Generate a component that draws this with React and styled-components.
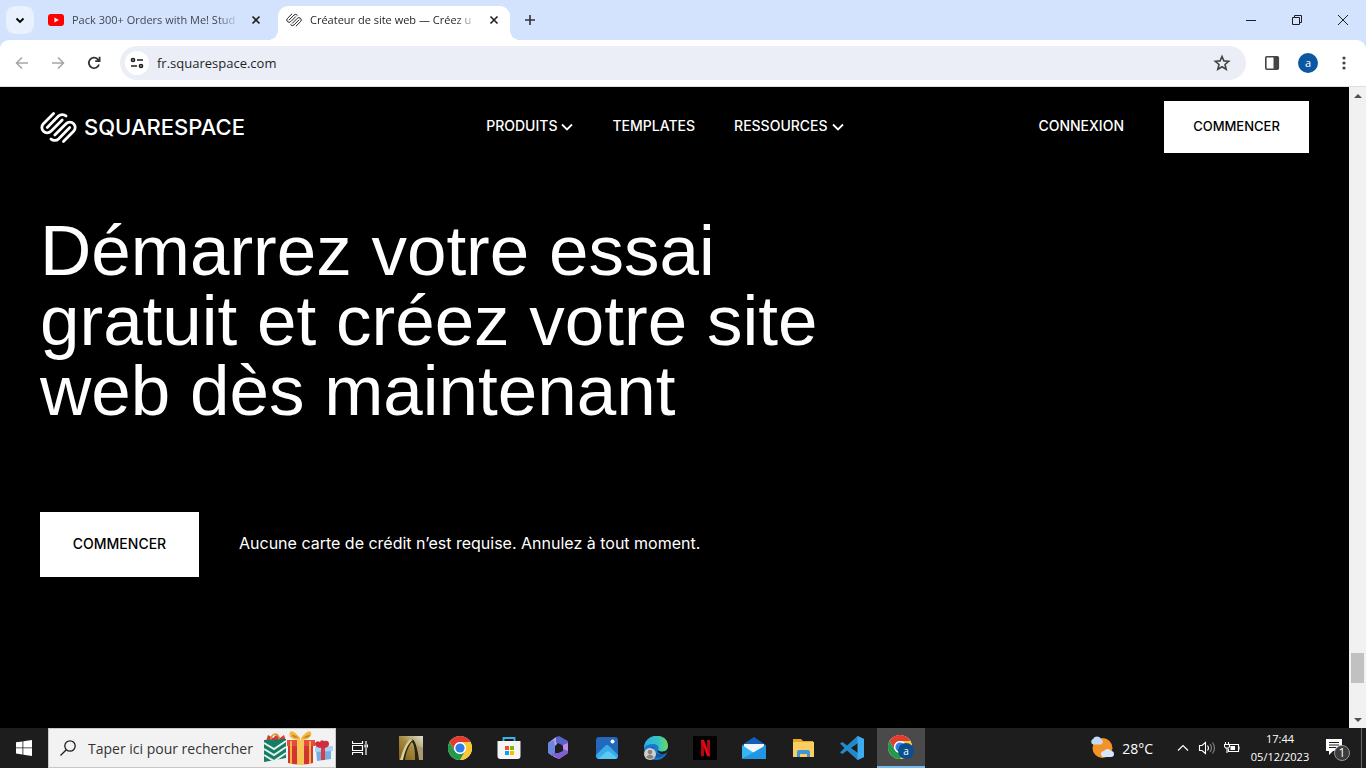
import React from "react";
import styled, { createGlobalStyle, css } from "styled-components";

const system = `"Open Sans", "Noto Sans", sans-serif`;
const brand = `Inter, "Liberation Sans", sans-serif`;

const GlobalStyle = createGlobalStyle`
  *, *::before, *::after { box-sizing: border-box; }
  body { margin: 0; background: #000; font-family: ${system}; }
  button, input { font: inherit; color: inherit; }
  button { border: 0; padding: 0; background: none; }
  a { color: inherit; text-decoration: none; }
  h1, p { margin: 0; }
  svg { display: block; flex: none; }
`;

const Window = styled.div`
  min-height: 100vh;
  display: flex;
  flex-direction: column;
`;

/* Browser chrome */
const TabStrip = styled.div`
  height: 40px;
  display: flex;
  background: #d3e3fd;
`;
const TabSearch = styled.button`
  width: 28px;
  height: 28px;
  margin: 6px;
  border-radius: 9px;
  background: #e9f1fe;
  display: grid;
  place-items: center;
`;
const Tabs = styled.div`
  display: flex;
  gap: 6px;
  padding-top: 6px;
`;
const activeTab = css`
  background: #fff;
  border-radius: 10px 10px 0 0;
  &::before, &::after {
    content: "";
    position: absolute;
    bottom: 0;
    width: 10px;
    height: 10px;
  }
  &::before { left: -10px; background: radial-gradient(circle at 0 0, transparent 10px, #fff 10px); }
  &::after { right: -10px; background: radial-gradient(circle at 100% 0, transparent 10px, #fff 10px); }
`;
const Tab = styled.div`
  position: relative;
  width: 232px;
  height: 34px;
  padding: 0 10px 6px 8px;
  display: flex;
  align-items: center;
  color: ${(p) => (p.$active ? "#1f1f1f" : "#41464f")};
  ${(p) => p.$active && activeTab}
`;
const TabTitle = styled.span`
  flex: 1;
  margin: 0 10px 0 8px;
  overflow: hidden;
  white-space: nowrap;
  font-size: 11px;
  line-height: 18px;
  mask-image: linear-gradient(90deg, #000 86%, transparent);
`;
const IconButton = styled.button`
  width: ${(p) => p.$w || 36}px;
  height: ${(p) => p.$h || 36}px;
  display: grid;
  place-items: center;
  color: ${(p) => p.$color || "#1f1f1f"};
`;
const WindowControls = styled.div`
  margin-left: auto;
  display: flex;
`;
const ToolbarBack = styled.div`
  background: #d3e3fd;
`;
const Toolbar = styled.div`
  height: 47px;
  padding: 0 4px;
  display: flex;
  align-items: center;
  background: #fff;
  border-bottom: 1px solid #dcdfe3;
  border-radius: 9px 9px 0 0;
`;
const Omnibox = styled.label`
  flex: 1;
  height: 34px;
  margin: 0 8px;
  padding: 0 6px 0 5px;
  display: flex;
  align-items: center;
  gap: 8px;
  border-radius: 17px;
  background: #ebeef7;
`;
const SiteInfo = styled.span`
  width: 24px;
  height: 24px;
  border-radius: 50%;
  background: #fff;
  display: grid;
  place-items: center;
`;
const Address = styled.input`
  flex: 1;
  min-width: 0;
  border: 0;
  padding: 0;
  outline: 0;
  background: none;
  font-size: 13px;
  color: #1f1f1f;
`;
const Avatar = styled.span`
  width: 20px;
  height: 20px;
  border-radius: 50%;
  background: #0b57a0;
  color: #fff;
  font-size: 11px;
  line-height: 19px;
  text-align: center;
`;

/* Page */
const Viewport = styled.div`
  flex: 1;
  display: flex;
`;
const Page = styled.div`
  flex: 1;
  padding: 14px 40px 40px;
  background: #000;
  color: #fff;
  font-family: ${brand};
`;
const Header = styled.header`
  display: grid;
  grid-template-columns: 446fr 552fr auto;
  align-items: center;
`;
const Logo = styled.a`
  display: flex;
  align-items: center;
  gap: 7px;
  font-size: 22px;
  line-height: 24px;
  font-weight: 500;
`;
const Nav = styled.nav`
  display: flex;
  gap: 39px;
`;
const NavLink = styled.a`
  display: flex;
  align-items: center;
  gap: 4px;
  padding-bottom: 2px;
  font-size: 14px;
  line-height: 20px;
  font-weight: 500;
`;
const NavButton = styled(NavLink).attrs({ as: "button", type: "button" })``;
const Account = styled.div`
  display: flex;
  align-items: center;
  gap: 40px;
`;
const Cta = styled.a`
  display: grid;
  place-items: center;
  width: ${(p) => (p.$large ? 159 : 145)}px;
  height: ${(p) => (p.$large ? 65 : 52)}px;
  padding-bottom: 2px;
  background: #fff;
  color: #000;
  font-size: ${(p) => (p.$large ? 14 : 13)}px;
  font-weight: 500;
`;
const Headline = styled.h1`
  max-width: 800px;
  margin: 63px 0 86px;
  font-family: "Liberation Sans", Arial, sans-serif;
  font-size: 71px;
  line-height: 70px;
  font-weight: 400;
`;
const Offer = styled.div`
  display: flex;
  align-items: center;
  gap: 40px;
`;
const OfferNote = styled.p`
  padding-bottom: 4px;
  font-size: 16px;
  line-height: 24px;
`;
const Scrollbar = styled.div`
  width: 17px;
  display: flex;
  flex-direction: column;
  align-items: center;
  background: #f1f1f1;
`;
const Space = styled.div`
  flex: ${(p) => p.$grow};
`;
const Thumb = styled.div`
  width: 13px;
  height: 30px;
  background: #c1c1c1;
`;

/* Taskbar */
const Taskbar = styled.footer`
  height: 40px;
  display: flex;
  background: #1d1d1d;
  color: #fff;
`;
const TaskButton = styled.button`
  width: 48px;
  height: 40px;
  display: grid;
  place-items: center;
  background: ${(p) => (p.$active ? "#4a4a4a" : "none")};
  border-bottom: ${(p) => (p.$active ? "2px solid #76b9ed" : "0")};
`;
const Search = styled.label`
  width: 288px;
  display: flex;
  align-items: center;
  padding: 0 2px 0 11px;
  background: #f2f2f2;
  border: 1px solid #c8c8c8;
  color: #1f1f1f;
`;
const SearchInput = styled.input`
  flex: 1;
  min-width: 0;
  margin: 0 6px 0 12px;
  border: 0;
  padding: 0;
  outline: 0;
  background: none;
  font-size: 14px;
  &::placeholder { color: #333; opacity: 1; }
`;
const Apps = styled.div`
  display: flex;
  gap: 1px;
  margin-left: 3px;
`;
const Tray = styled.div`
  margin-left: auto;
  display: flex;
  align-items: center;
`;
const Weather = styled.button`
  display: flex;
  align-items: center;
  gap: 8px;
  margin-right: 18px;
  font-size: 14px;
`;
const Clock = styled.time`
  width: 70px;
  text-align: center;
  font-size: 11px;
  line-height: 18px;
`;
const ShowDesktop = styled.button`
  width: 5px;
  height: 40px;
  border-left: 1px solid #6a6a6a;
`;

const Stroke = ({ size = 16, w = 1.5, d }) => (
  <svg width={size} height={size} viewBox={`0 0 ${size} ${size}`} fill="none" stroke="currentColor" strokeWidth={w}>
    <path d={d} />
  </svg>
);
const CloseIcon = () => <Stroke size={12} w={1.6} d="M2.500 2.500l7 7M9.500 2.500l-7 7" />;
const NavChevron = () => <Stroke size={12} w={1.8} d="M1 4.500l5 5 5-5" />;

const SquarespaceMark = ({ size, w }) => (
  <svg width={size} height={size} viewBox="0 0 24 24" fill="none" stroke="currentColor" strokeWidth={w} strokeLinecap="round">
    <path d="M9.600 16.900L16.900 9.550A3.460 3.460 0 0 1 21.800 14.450L15.200 21.050" />
    <path d="M7.100 19.400A3.460 3.460 0 0 0 12 19.400L19.300 12" />
    <path d="M14.400 7.100L7.100 14.450A3.460 3.460 0 0 1 2.200 9.550L8.800 2.950" />
    <path d="M16.900 4.600A3.460 3.460 0 0 0 12 4.600L4.700 12" />
  </svg>
);
const YouTube = () => (
  <svg width="16" height="16" viewBox="0 0 16 16">
    <rect y="2" width="16" height="12" rx="3" fill="#f00" />
    <path d="M6.400 5.400v5.200l4.400-2.600z" fill="#fff" />
  </svg>
);
const Chrome = ({ badge }) => (
  <svg width={badge ? 26 : 24} height="24" viewBox={badge ? "0 0 26 24" : "0 0 24 24"}>
    <circle cx="12" cy="12" r="12" fill="#fff" />
    <path d="M1.600 6A12 12 0 0 1 22.400 6H12a6 6 0 0 0-5.200 9z" fill="#e33b2e" />
    <path d="M22.400 6A12 12 0 0 1 12 24l5.200-9A6 6 0 0 0 12 6z" fill="#fcc934" />
    <path d="M12 24A12 12 0 0 1 1.600 6l5.200 9a6 6 0 0 0 10.400 0z" fill="#229a4a" />
    <circle cx="12" cy="12" r="5.800" fill="#fff" />
    <circle cx="12" cy="12" r="4.600" fill="#2f7de9" />
    {badge && (
      <>
        <circle cx="18" cy="16" r="8" fill="#0b4f8f" />
        <text x="18" y="20" textAnchor="middle" fontSize="10" fill="#fff">a</text>
      </>
    )}
  </svg>
);
const Arch = () => (
  <svg width="24" height="24" viewBox="0 0 24 24">
    <defs>
      <linearGradient id="arch" x1="0" y1="1" x2="1" y2="0">
        <stop offset="0" stopColor="#7b5c14" /><stop offset=".5" stopColor="#a58a3e" /><stop offset="1" stopColor="#e0dfd5" />
      </linearGradient>
    </defs>
    <path d="M0 0h24v24H0z" fill="url(#arch)" />
    <path d="M2 24C4 13 8 4 13 3c4 2 6 12 7 21h-4C16 14 15 8 13 6 10 9 7 16 6 24z" fill="#2a230d" />
    <path d="M1 24C4 13 8 4 12 3l2 1C9 7 6 15 4 24z" fill="#d9cd9c" />
    <path d="M17 9l7 3v12h-4c0-6-1-11-3-15z" fill="#a89874" />
  </svg>
);
const Store = () => (
  <svg width="24" height="24" viewBox="0 0 24 24">
    <path d="M6.500 6V2h11v4" fill="none" stroke="#39b3ea" strokeWidth="1.800" />
    <path d="M.5 5h23v15a3 3 0 0 1-3 3h-17a3 3 0 0 1-3-3z" fill="#f4f4f4" />
    <path d="M8 10h4v4H8z" fill="#f25022" /><path d="M13 10h4v4h-4z" fill="#7fba00" />
    <path d="M8 15h4v4H8z" fill="#00a4ef" /><path d="M13 15h4v4h-4z" fill="#ffb900" />
  </svg>
);
const Office = () => (
  <svg width="24" height="24" viewBox="0 0 24 24">
    <path d="M2 7l8-6 5 1-3 6-3 3v5l-3 3-4-3z" fill="#b7a2ee" />
    <path d="M10 1l3-1 9 5v7l-5 1-1-4-6-2z" fill="#5b62c9" />
    <path d="M22 7v10l-9 6-5-2-3-3 8-1 4-3V9z" fill="#c08cec" />
    <path d="M2 7l6-3 1 8v5l-3 3-4-3z" fill="#6a86e0" />
    <path d="M5 18l7-1 5-4 5 2v2l-9 6z" fill="#7b60cf" />
    <path d="M12 7l5 3v5l-5 2-3-2v-5z" fill="#1d1d1d" />
  </svg>
);
const Photos = () => (
  <svg width="24" height="24" viewBox="0 0 24 24">
    <rect x="1" y="1" width="22" height="22" rx="3" fill="#2368bd" />
    <path d="M1 19L10 10q2-2 4 0l9 9v1q0 3-3 3H4q-3 0-3-4z" fill="#38aee9" />
    <path d="M3 23l8-7q2-1.500 4 0l7 6-2 1z" fill="#5cc8f5" />
    <circle cx="17.500" cy="5.500" r="2" fill="#fff" />
  </svg>
);
const Edge = () => (
  <svg width="26" height="24" viewBox="0 0 26 24">
    <defs>
      <linearGradient id="edge"><stop stopColor="#2bb0e6" /><stop offset=".6" stopColor="#35c4c0" /><stop offset="1" stopColor="#6bdc5c" /></linearGradient>
    </defs>
    <circle cx="13" cy="12" r="12" fill="#1878cf" />
    <path d="M1 12C2-4 25-4 25 10c0 6-8 7-10 4 2-3-1-6-5-6C6 8 3 9 1 12z" fill="url(#edge)" />
    <path d="M11 11c-3 5 4 9 12 6-4 7-15 6-17-1 0-3 2-5 5-5z" fill="#115ba4" />
    <path d="M15 14c2 3 10 2 10-3v4c-1 2-3 3-5 3-4 0-6-2-5-4z" fill="#1d1d1d" />
    <circle cx="7" cy="18" r="6" fill="#cfcfcf" />
    <circle cx="7" cy="16" r="2.300" fill="#8a827d" /><path d="M3 21q4-5 8 0-4 4-8 0z" fill="#8a827d" />
  </svg>
);
const Netflix = () => (
  <svg width="24" height="24" viewBox="0 0 24 24">
    <path d="M0 0h24v24H0z" fill="#000" />
    <path d="M8 4h3v16l-3 .5zM14 4h3v16.500l-3-.5z" fill="#b20710" />
    <path d="M8 4h3l6 16.500-3-.5z" fill="#e50914" />
  </svg>
);
const Mail = () => (
  <svg width="26" height="24" viewBox="0 0 26 24">
    <path d="M1 9l12-8 12 8v6H1z" fill="#1260b6" />
    <path d="M3 8h20v12H3z" fill="#f2f6fa" />
    <path d="M1 9l12 8-12 6z" fill="#35b5f1" /><path d="M25 9L1 23h24z" fill="#2196e3" />
  </svg>
);
const Explorer = () => (
  <svg width="24" height="24" viewBox="0 0 24 24">
    <path d="M2 3h8l2 2h10v4H2z" fill="#e8a824" />
    <path d="M2 6h21v15H2z" fill="#fbcf5f" />
    <path d="M6 21v-5q0-2 2-2h9q2 0 2 2v5h-3v-3H9v3z" fill="#3e96d6" />
  </svg>
);
const VSCode = () => (
  <svg width="24" height="24" viewBox="0 0 24 24">
    <path d="M17.500 0L24 3v18l-6.500 3L7 14.500 2.500 18 0 16.500 4.500 12 0 7.500 2.500 6 7 9.500zM18 7l-7 5 7 5z" fill="#2489ca" />
    <path d="M17.500 0L24 3v18l-6.500 3z" fill="#3cabf0" />
  </svg>
);
const Gifts = () => (
  <svg width="70" height="36" viewBox="0 0 70 36">
    <path d="M3 11l2-6 5 3 3-3 4 3 4-3 2 6z" fill="#d93636" />
    <path d="M8 11V7q5-6 8 0v4" fill="none" stroke="#d69b30" strokeWidth="1.500" />
    <path d="M1 10l22-1v19L1 32z" fill="#157d64" />
    <path d="M1 13l10 6 12-8M1 19l10 6 12-8M1 25l10 6 12-8" fill="none" stroke="#e3f3ec" strokeWidth="2" />
    <path d="M25 14h25v19q-12 3-25 0z" fill="#d4342f" />
    <path d="M24 10h28v6H24z" fill="#e64c40" />
    <path d="M28 11v23M47 11v23" fill="none" stroke="#f0b443" strokeWidth="2" />
    <path d="M34 10h7v25h-7z" fill="#f7c65b" />
    <path d="M37 10Q24 9 27 2q3-3 10 6zM38 10q12-1 10-8-3-3-10 6z" fill="#f5b63c" />
    <path d="M36 8q-6-4-7-3 0 3 7 3zM40 8q6-4 7-3 0 3-7 3z" fill="#c98420" />
    <path d="M53 19l15-1v11l-14 2z" fill="#73aee5" />
    <path d="M52 17l18-1v5l-18 1z" fill="#a9d2f3" />
    <path d="M58 17h4v13h-4z" fill="#d63d4a" />
    <path d="M60 18q-9 0-8-5 2-3 5-1 1-3 4-1 5-1 5 3 0 4-6 4z" fill="#d12e3d" />
  </svg>
);
const WeatherIcon = () => (
  <svg width="24" height="24" viewBox="0 0 24 24">
    <circle cx="12.500" cy="12" r="10" fill="#f39325" />
    <path d="M3 8.500a3 3 0 0 1 0-5.500 4.500 4.500 0 0 1 8 0 3 3 0 0 1 0 5.500z" fill="#c0daf8" />
    <path d="M14 21a3 3 0 0 1 0-6 4 4 0 0 1 7 0 3 3 0 0 1 0 6z" fill="#d5e7fc" />
  </svg>
);

const apps = [
  ["ArchiCAD", Arch], ["Chrome", Chrome], ["Store", Store], ["Office", Office], ["Photos", Photos], ["Edge", Edge],
  ["Netflix", Netflix], ["Mail", Mail], ["Explorer", Explorer], ["VS Code", VSCode],
];

export default function App() {
  return (
    <Window>
      <GlobalStyle />
      <TabStrip>
        <TabSearch aria-label="Rechercher des onglets"><Stroke size={10} w={1.8} d="M1.500 3.500L5 7l3.500-3.500" /></TabSearch>
        <Tabs>
          <Tab>
            <YouTube />
            <TabTitle>Pack 300+ Orders with Me! Stud</TabTitle>
            <IconButton $w={12} $h={16} aria-label="Fermer"><CloseIcon /></IconButton>
          </Tab>
          <Tab $active>
            <SquarespaceMark size={16} w={1.5} />
            <TabTitle>Créateur de site web — Créez u</TabTitle>
            <IconButton $w={12} $h={16} aria-label="Fermer"><CloseIcon /></IconButton>
          </Tab>
        </Tabs>
        <IconButton $w={40} $h={40} $color="#333" aria-label="Nouvel onglet"><Stroke size={12} w={1.6} d="M6 1v10M1 6h10" /></IconButton>
        <WindowControls>
          <IconButton $w={46} $h={40} aria-label="Réduire"><Stroke size={10} w={1} d="M0 5.500h10" /></IconButton>
          <IconButton $w={46} $h={40} aria-label="Restaurer"><Stroke size={10} w={1} d="M.5 2.500h7v7h-7zM2.500 2.500v-2h7v7h-2" /></IconButton>
          <IconButton $w={46} $h={40} aria-label="Fermer la fenêtre"><Stroke size={10} w={1} d="M0 0l10 10M10 0L0 10" /></IconButton>
        </WindowControls>
      </TabStrip>
      <ToolbarBack>
        <Toolbar>
          <IconButton $color="#a3a5a8" aria-label="Précédent"><Stroke d="M14 8H3M8 2.500L2.500 8 8 13.500" /></IconButton>
          <IconButton $color="#a3a5a8" aria-label="Suivant"><Stroke d="M2 8h11M8 2.500L13.500 8 8 13.500" /></IconButton>
          <IconButton $color="#333" aria-label="Actualiser"><Stroke w={1.8} d="M13 9.500A5.200 5.200 0 1 1 11.800 4.300L13.500 6M13.600 1.800V6.200H9.200" /></IconButton>
          <Omnibox>
            <SiteInfo>
              <svg width="14" height="14" viewBox="0 0 14 14" fill="none" stroke="#1f1f1f" strokeWidth="1.700">
                <path d="M7 4h6M1 10h6" /><circle cx="3" cy="4" r="1.500" /><circle cx="11" cy="10" r="1.500" />
              </svg>
            </SiteInfo>
            <Address aria-label="Adresse" defaultValue="fr.squarespace.com" />
            <svg width="36" height="18" viewBox="0 0 36 18" fill="none" stroke="#444" strokeWidth="1.600">
              <path d="M18 2.500l1.900 4.400 4.800.4-3.700 3.200 1.200 4.700L18 12.700l-4.200 2.500 1.200-4.700-3.700-3.200 4.800-.4z" />
            </svg>
          </Omnibox>
          <IconButton $color="#444" aria-label="Panneau latéral">
            <svg width="16" height="16" viewBox="0 0 16 16"><rect x="1.800" y="1.800" width="12.500" height="12.500" rx="1" fill="none" stroke="currentColor" strokeWidth="1.600" /><path d="M9.500 2H14v12H9.500z" fill="currentColor" /></svg>
          </IconButton>
          <IconButton aria-label="Profil"><Avatar>a</Avatar></IconButton>
          <IconButton $color="#444" aria-label="Menu">
            <svg width="4" height="16" viewBox="0 0 4 16" fill="currentColor"><circle cx="2" cy="3" r="1.600" /><circle cx="2" cy="8" r="1.600" /><circle cx="2" cy="13" r="1.600" /></svg>
          </IconButton>
        </Toolbar>
      </ToolbarBack>

      <Viewport>
        <Page>
          <Header>
            <Logo href="#"><SquarespaceMark size={37} w={1.8} />SQUARESPACE</Logo>
            <Nav>
              <NavButton>PRODUITS <NavChevron /></NavButton>
              <NavLink href="#">TEMPLATES</NavLink>
              <NavButton>RESSOURCES <NavChevron /></NavButton>
            </Nav>
            <Account>
              <NavLink href="#">CONNEXION</NavLink>
              <Cta href="#">COMMENCER</Cta>
            </Account>
          </Header>
          <main>
            <Headline>Démarrez votre essai gratuit et créez votre site web dès maintenant</Headline>
            <Offer>
              <Cta href="#" $large>COMMENCER</Cta>
              <OfferNote>Aucune carte de crédit n’est requise. Annulez à tout moment.</OfferNote>
            </Offer>
          </main>
        </Page>
        <Scrollbar>
          <IconButton $w={17} $h={17} $color="#505050" aria-label="Haut"><svg width="8" height="4" viewBox="0 0 8 4" fill="currentColor"><path d="M0 4l4-4 4 4z" /></svg></IconButton>
          <Space $grow={549} />
          <Thumb />
          <Space $grow={28} />
          <IconButton $w={17} $h={17} $color="#505050" aria-label="Bas"><svg width="8" height="4" viewBox="0 0 8 4" fill="currentColor"><path d="M0 0l4 4 4-4z" /></svg></IconButton>
        </Scrollbar>
      </Viewport>

      <Taskbar>
        <TaskButton aria-label="Démarrer">
          <svg width="16" height="16" viewBox="0 0 16 16" fill="#fff"><path d="M0 2.300L6.500 1.400v6.100H0zM7.300 1.300L16 0v7.500H7.300zM0 8.300h6.500v6.200L0 13.600zM7.300 8.300H16V16l-8.700-1.300z" /></svg>
        </TaskButton>
        <Search>
          <svg width="16" height="16" viewBox="0 0 16 16" fill="none" stroke="#1f1f1f" strokeWidth="1.300"><circle cx="10" cy="6" r="5.200" /><path d="M6.300 9.700L.5 15.500" /></svg>
          <SearchInput aria-label="Rechercher" placeholder="Taper ici pour rechercher" />
          <Gifts />
        </Search>
        <TaskButton aria-label="Vue des tâches">
          <Stroke w={1.2} d="M.5 1v2.500h10V1M.5 15v-2.500h10V15M.5 5.500h10v5H.5zM14 1v3M14 8v7M13 5h2.500v2H13z" />
        </TaskButton>
        <Apps>
          {apps.map(([name, Icon]) => <TaskButton key={name} aria-label={name}><Icon /></TaskButton>)}
          <TaskButton $active aria-label="Chrome, profil a"><Chrome badge /></TaskButton>
        </Apps>
        <Tray>
          <Weather><WeatherIcon />28°C</Weather>
          <IconButton $w={24} $color="#fff" aria-label="Icônes masquées"><Stroke size={12} w={1.2} d="M1 8.500l5-5 5 5" /></IconButton>
          <IconButton $w={24} $color="#fff" aria-label="Volume">
            <svg width="18" height="16" viewBox="0 0 18 16" fill="none" stroke="currentColor" strokeWidth="1.100">
              <path d="M1.500 5.500h2.500l3.500-3v11L4 10.500H1.500zM9.500 5.500q2 2.500 0 5" /><path d="M12 4q3 4 0 8M14.500 2.500q4 5.500 0 11" stroke="#888" />
            </svg>
          </IconButton>
          <IconButton $w={26} $color="#fff" aria-label="Batterie">
            <svg width="16" height="14" viewBox="0 0 16 14" fill="none" stroke="currentColor" strokeWidth="1.100">
              <path d="M6 3.500h8.500v7H4.500V8M15 5.500v3M1.500 1v2M4.500 1v2M.5 3.500h5v2l-1 1.500h-3L.5 5.500zM3 7v5" /><path d="M7 5.500h3.500v3H7z" fill="currentColor" />
            </svg>
          </IconButton>
          <Clock>17:44<br />05/12/2023</Clock>
          <IconButton $w={46} $color="#fff" aria-label="Notifications, 1 nouvelle">
            <svg width="26" height="26" viewBox="0 0 26 26">
              <path d="M1 4h16v12H8l-4 4v-4H1z" fill="#fff" /><path d="M4 7.500h10M4 10h10M4 12.500h7" stroke="#1d1d1d" />
              <circle cx="17" cy="18" r="7.500" fill="#3c3c3c" stroke="#999" />
              <text x="17" y="22" textAnchor="middle" fontSize="12" fill="#fff">1</text>
            </svg>
          </IconButton>
          <ShowDesktop aria-label="Afficher le bureau" />
        </Tray>
      </Taskbar>
    </Window>
  );
}
